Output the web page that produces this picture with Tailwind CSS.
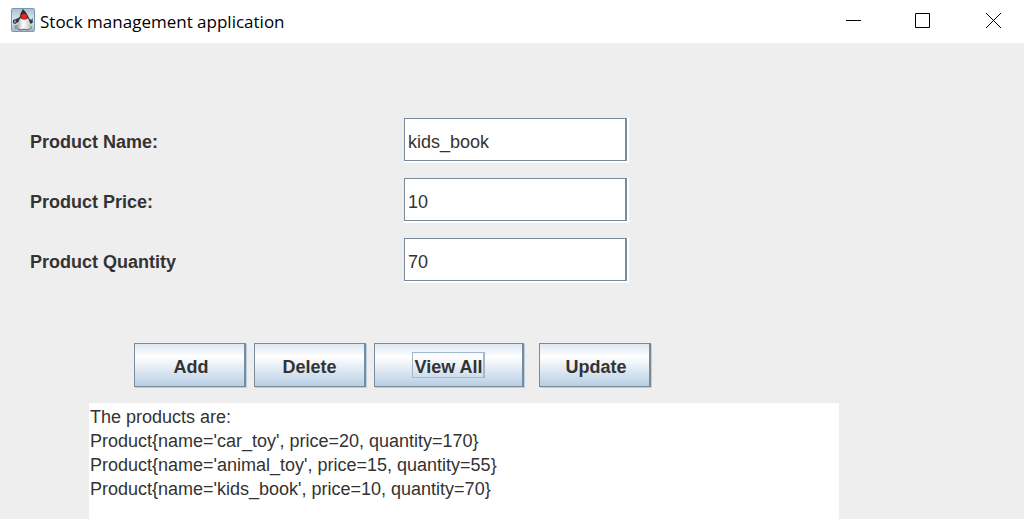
<!DOCTYPE html>
<html lang="en">
<head>
<meta charset="utf-8">
<title>Stock management application</title>
<script src="https://cdn.jsdelivr.net/npm/@tailwindcss/browser@4"></script>
</head>
<body class="flex min-h-screen flex-col bg-[#eeeeee] font-['Liberation_Sans',Arial,sans-serif] text-lg leading-6 text-[#333333]">
<header class="flex h-[43px] shrink-0 items-center bg-white pl-[11px] text-black">
  <svg class="mb-[3px] h-6 w-6 shrink-0" viewBox="0 0 24 24" aria-hidden="true">
    <defs>
      <linearGradient id="tile" x1="0" y1="0" x2="0" y2="1"><stop offset="0" stop-color="#a9bfd2"/><stop offset=".5" stop-color="#dfe6ec"/><stop offset="1" stop-color="#a3b6c6"/></linearGradient>
      <linearGradient id="belly" x1="0" y1="0" x2="1" y2="0"><stop offset="0" stop-color="#a9acae"/><stop offset=".45" stop-color="#ffffff"/><stop offset="1" stop-color="#c4c6c7"/></linearGradient>
    </defs>
    <rect x=".5" y=".5" width="23" height="23" rx="1" fill="url(#tile)" stroke="#7c97ae"/>
    <path d="M3 18l5-2h10l3 3v2H4z" fill="#8b969e"/>
    <path d="M9 9l-4 2-3 1v3l2 1 5-3zM17 9l3 3 2-2v4l-2 2-4-4z" fill="#303b43"/>
    <path d="M3 13l2-1v2l-2 1zM20 12l2-1v2z" fill="#78a3bd"/>
    <path d="M12 1c-1 2-3 4-3 7l-1 4h10c0-4-3-8-6-11z" fill="#2c3032"/>
    <path d="M9 10c-1 3-4 9-2 11 2 2 4 1 6 0 2 1 5 2 6 0 1-3 0-7-2-11-2 2-5 2-8 0z" fill="url(#belly)"/>
    <path d="M7 21l3 1 3-1 3 1 3-1" fill="none" stroke="#5d6366"/>
    <ellipse cx="13" cy="8.5" rx="3" ry="2.7" fill="#e52326"/>
  </svg>
  <h1 class="ml-[5px] whitespace-nowrap font-['Open_Sans','Segoe_UI',sans-serif] text-[17px] leading-6">Stock management application</h1>
  <div class="ml-auto flex self-stretch pb-[2px]">
    <button type="button" aria-label="Minimize" class="flex w-[70px] items-center justify-center"><svg class="h-[15px] w-[15px]" viewBox="0 0 15 15"><path d="M0 7.5h15" stroke="#000"/></svg></button>
    <button type="button" aria-label="Maximize" class="flex w-[68px] items-center justify-center"><svg class="h-[15px] w-[15px]" viewBox="0 0 15 15"><path d="M.5.5h14v14H.5z" fill="none" stroke="#000"/></svg></button>
    <button type="button" aria-label="Close" class="flex w-[68px] items-center justify-center pl-[6px]"><svg class="h-[15px] w-[15px]" viewBox="0 0 15 15"><path d="M0 0l15 15M15 0L0 15" stroke="#000"/></svg></button>
  </div>
</header>
<main class="flex flex-1 flex-col">
  <form class="mt-[75px] grid grid-cols-[374px_223px] items-stretch gap-y-[17px] pl-[30px]">
    <label for="name" class="pt-3 font-bold">Product Name:</label>
    <input id="name" type="text" value="kids_book" class="h-[43px] w-full border border-r-2 border-[#7a8a99] bg-white pt-[6px] pl-[3px] shadow-[1px_1px_0_1px_#ffffff] outline-none">
    <label for="price" class="pt-3 font-bold">Product Price:</label>
    <input id="price" type="text" value="10" class="h-[43px] w-full border border-r-2 border-[#7a8a99] bg-white pt-[6px] pl-[3px] shadow-[1px_1px_0_1px_#ffffff] outline-none">
    <label for="quantity" class="pt-3 font-bold">Product Quantity</label>
    <input id="quantity" type="text" value="70" class="h-[43px] w-full border border-r-2 border-[#7a8a99] bg-white pt-[6px] pl-[3px] shadow-[1px_1px_0_1px_#ffffff] outline-none">
  </form>
  <div class="mt-[62px] flex gap-2 pl-[134px] font-bold">
    <button type="button" class="h-11 w-28 border border-r-2 border-[#7a8a99] bg-linear-to-b from-[#dde8f3] via-white via-30% to-[#b8cfe5] pt-1 pl-[3px] shadow-[1px_1px_0_0_#b8cfe5]">Add</button>
    <button type="button" class="h-11 w-28 border border-r-2 border-[#7a8a99] bg-linear-to-b from-[#dde8f3] via-white via-30% to-[#b8cfe5] pt-1 shadow-[1px_1px_0_0_#b8cfe5]">Delete</button>
    <button type="button" class="flex h-11 w-[150px] items-center justify-center border border-r-2 border-[#7a8a99] bg-linear-to-b from-[#dde8f3] via-white via-30% to-[#b8cfe5] shadow-[1px_1px_0_0_#b8cfe5]"><span class="h-[26px] border border-r-2 border-[#a3b8cc] pt-[2px] pl-px">View All</span></button>
    <button type="button" class="ml-[7px] h-11 w-28 border border-r-2 border-[#7a8a99] bg-linear-to-b from-[#dde8f3] via-white via-30% to-[#b8cfe5] pt-1 pl-[3px] shadow-[1px_1px_0_0_#b8cfe5]">Update</button>
  </div>
  <textarea readonly aria-label="Products" class="mt-4 mr-[185px] ml-[89px] flex-1 resize-none bg-white pt-[2px] pl-px outline-none">The products are:
Product{name='car_toy', price=20, quantity=170}
Product{name='animal_toy', price=15, quantity=55}
Product{name='kids_book', price=10, quantity=70}</textarea>
</main>
</body>
</html>
